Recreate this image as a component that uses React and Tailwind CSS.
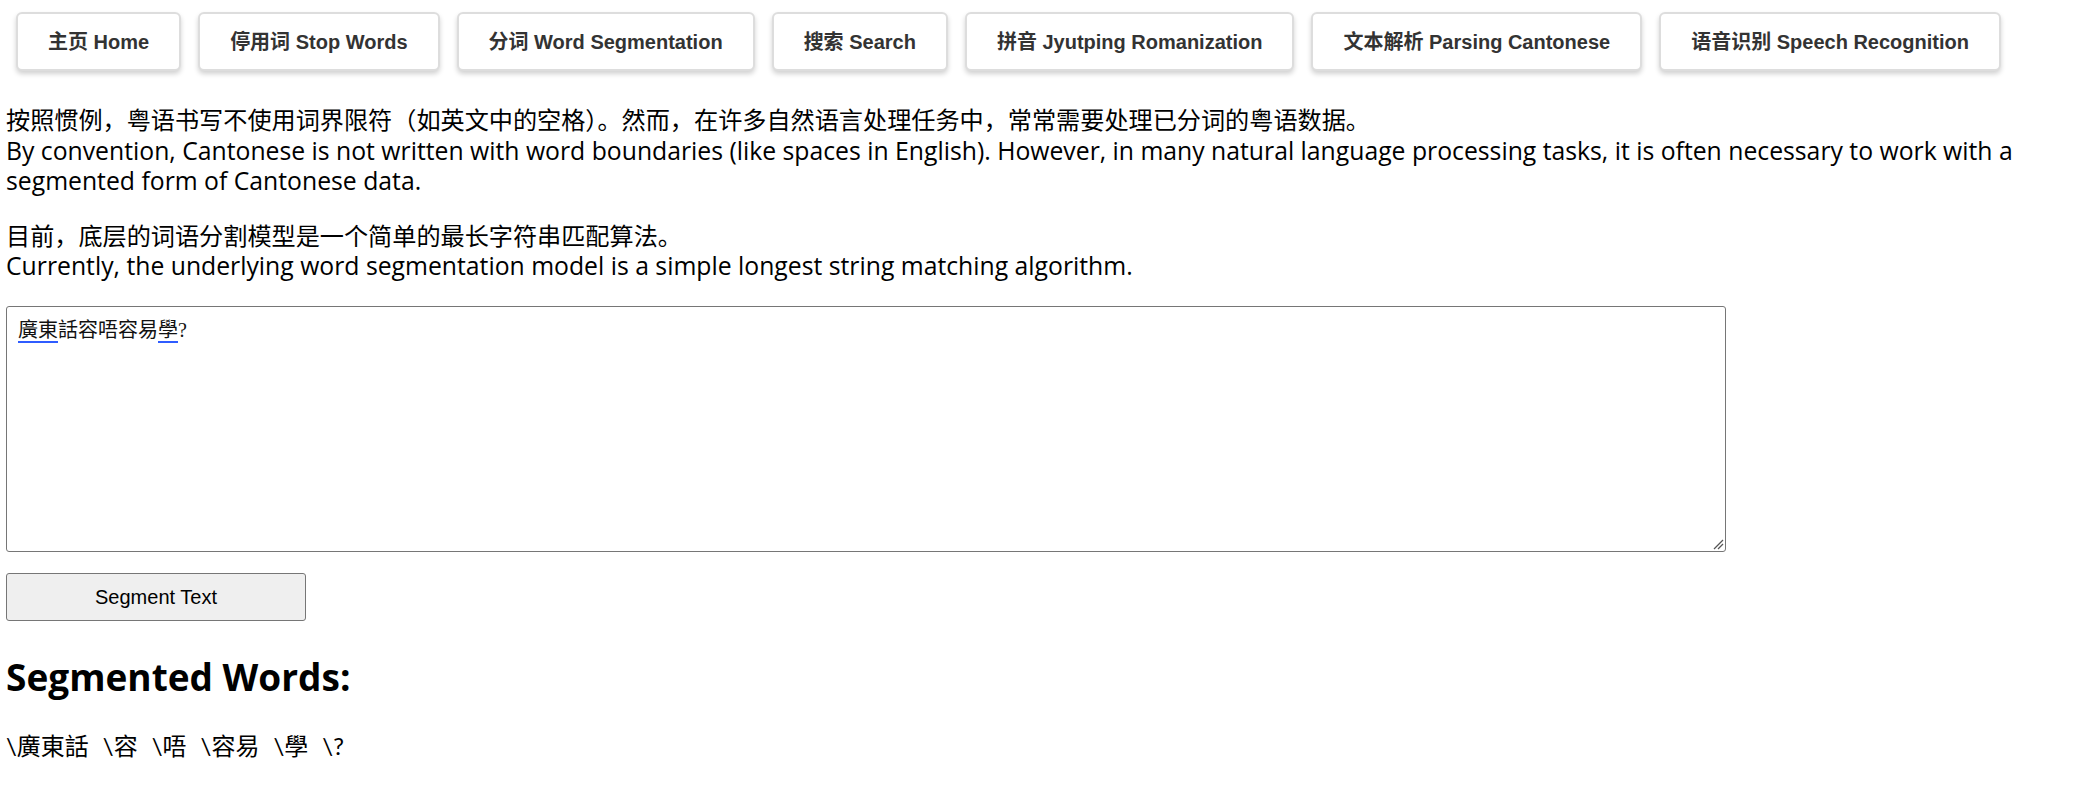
import React from "react";

const navItems = [
  "主页 Home",
  "停用词 Stop Words",
  "分词 Word Segmentation",
  "搜索 Search",
  "拼音 Jyutping Romanization",
  "文本解析 Parsing Cantonese",
  "语音识别 Speech Recognition",
];

const words = ["廣東話", "容", "唔", "容易", "學", "?"];

export default function App() {
  return (
    <div className="min-h-screen bg-white text-black px-[6px] font-['Open_Sans','Noto_Sans_CJK_SC',sans-serif]">
      <nav className="flex gap-[17px] pl-[10px] pt-[12px]">
        {navItems.map((t) => (
          <button
            key={t}
            className="h-[59px] px-[30px] bg-white border-2 border-[#dddddd] rounded-[6px] shadow-[0_3px_5px_rgba(0,0,0,0.18)] text-[20px] font-bold text-[#333333] font-['Liberation_Sans','Noto_Sans_CJK_SC',sans-serif] whitespace-nowrap"
          >
            {t}
          </button>
        ))}
      </nav>

      <p className="mt-[34px] text-[24px] leading-[30.5px]">
        <span className="block text-[24.15px]">
          按照惯例，粤语书写不使用词界限符（如英文中的空格）。然而，在许多自然语言处理任务中，常常需要处理已分词的粤语数据。
        </span>
        <span className="block text-[24.75px] leading-[30.5px]">
          By convention, Cantonese is not written with word boundaries (like spaces in English). However, in many natural language processing tasks, it is often necessary to work with a segmented form of Cantonese data.
        </span>
      </p>

      <p className="mt-[24px] text-[24px] leading-[30.5px]">
        <span className="block text-[24.15px]">目前，底层的词语分割模型是一个简单的最长字符串匹配算法。</span>
        <span className="block text-[24.75px] leading-[30.5px]">
          Currently, the underlying word segmentation model is a simple longest string matching algorithm.
        </span>
      </p>

      <div className="relative mt-[24px] w-[1720px] h-[246px] border border-[#767676] rounded-[3px] px-[11px] py-[11px] text-[20px] leading-[24px] text-[#111] font-['Liberation_Serif','Noto_Sans_CJK_TC',serif]">
        <span className="underline decoration-[#2f5cff] decoration-2 underline-offset-[4px]">廣東</span>
        <span>話容唔容易</span>
        <span className="underline decoration-[#2f5cff] decoration-2 underline-offset-[4px]">學</span>
        <span>?</span>
        <svg
          className="absolute right-[1px] bottom-[1px]"
          width="12"
          height="12"
          viewBox="0 0 12 12"
        >
          <line x1="11" y1="2" x2="2" y2="11" stroke="#555" strokeWidth="1.2" />
          <line x1="11" y1="6" x2="6" y2="11" stroke="#555" strokeWidth="1.2" />
        </svg>
      </div>

      <button className="block mt-[21px] w-[300px] h-[48px] bg-[#efefef] border border-[#767676] rounded-[3px] text-[20px] text-black font-['Liberation_Sans',sans-serif]">
        Segment Text
      </button>

      <h2 className="mt-[32px] text-[37px] leading-[48px] font-bold">
        Segmented Words:
      </h2>

      <div className="mt-[29px] text-[24px] leading-[31px] flex font-['Lato','Noto_Sans_CJK_SC',sans-serif]">
        {words.map((w, i) => (
          <span key={i} className="mr-[14px]">
            \{w}
          </span>
        ))}
      </div>
    </div>
  );
}
